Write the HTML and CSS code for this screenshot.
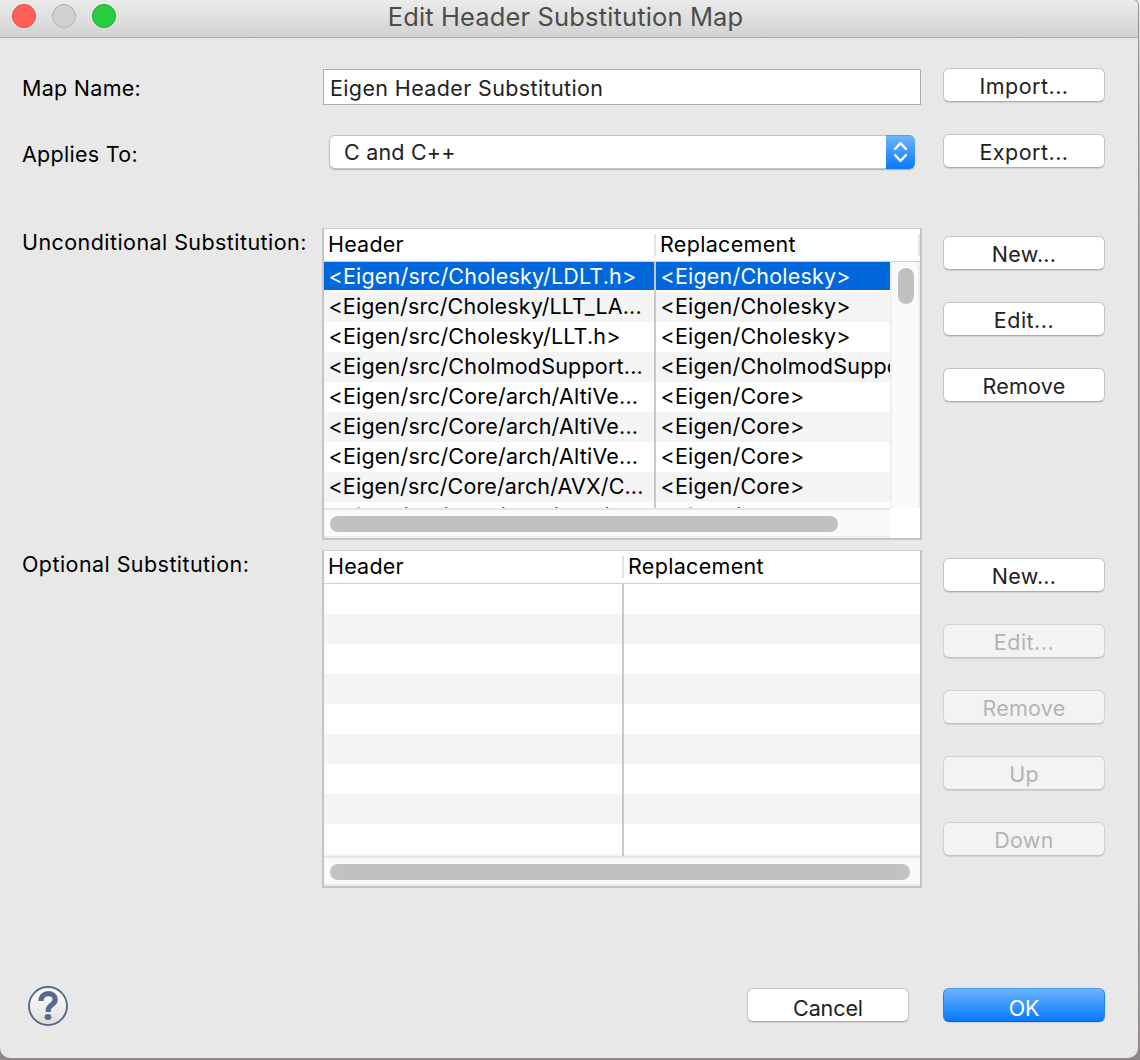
FILE: index.html
```html
<!DOCTYPE html>
<html lang="en">
<head>
<meta charset="utf-8">
<title>Edit Header Substitution Map</title>
<link rel="stylesheet" href="styles.css">
</head>
<body>
<main class="window">
  <header class="titlebar">
    <div class="lights"><span class="light close"></span><span class="light minimize"></span><span class="light zoom"></span></div>
    <h1 class="title">Edit Header Substitution Map</h1>
  </header>
  <section class="form">
    <label class="label label-field">Map Name:</label>
    <div class="field"><div class="text-input">Eigen Header Substitution</div></div>
    <div class="actions"><button class="btn dots">Import...</button></div>

    <label class="label label-field">Applies To:</label>
    <div class="field"><div class="select"><span class="select-value">C and C++</span>
      <span class="select-arrows"><svg width="29" height="34" viewBox="0 0 29 34" fill="none" stroke="#fff" stroke-width="2.4" stroke-linecap="round" stroke-linejoin="round"><path d="M9 14l5.500-5.800 5.500 5.800M9 20l5.500 5.800 5.500-5.800"/></svg></span></div></div>
    <div class="actions"><button class="btn dots">Export...</button></div>

    <label class="label label-wide">Unconditional Substitution:</label>
    <div class="table table-first">
      <div class="thead"><span class="th">Header</span><span class="th th-split">Replacement</span><span class="th-end"></span></div>
      <div class="tbody">
        <div class="rows">
          <div class="row selected"><span class="td">&lt;Eigen/src/Cholesky/LDLT.h&gt;</span><span class="td">&lt;Eigen/Cholesky&gt;</span></div>
          <div class="row"><span class="td snug">&lt;Eigen/src/Cholesky/LLT_LA...</span><span class="td">&lt;Eigen/Cholesky&gt;</span></div>
          <div class="row"><span class="td">&lt;Eigen/src/Cholesky/LLT.h&gt;</span><span class="td">&lt;Eigen/Cholesky&gt;</span></div>
          <div class="row"><span class="td">&lt;Eigen/src/CholmodSupport...</span><span class="td">&lt;Eigen/CholmodSupport&gt;</span></div>
          <div class="row"><span class="td">&lt;Eigen/src/Core/arch/AltiVe...</span><span class="td">&lt;Eigen/Core&gt;</span></div>
          <div class="row"><span class="td">&lt;Eigen/src/Core/arch/AltiVe...</span><span class="td">&lt;Eigen/Core&gt;</span></div>
          <div class="row"><span class="td">&lt;Eigen/src/Core/arch/AltiVe...</span><span class="td">&lt;Eigen/Core&gt;</span></div>
          <div class="row"><span class="td snug">&lt;Eigen/src/Core/arch/AVX/C...</span><span class="td">&lt;Eigen/Core&gt;</span></div>
          <div class="row"><span class="td snug">&lt;Eigen/src/Core/arch/AVX/M...</span><span class="td">&lt;Eigen/Core&gt;</span></div>
        </div>
        <div class="vscroll"><div class="vthumb"></div></div>
      </div>
      <div class="hscroll"><div class="hthumb"></div></div>
    </div>
    <div class="actions actions-table">
      <button class="btn">New...</button><button class="btn dots">Edit...</button><button class="btn">Remove</button>
    </div>

    <label class="label label-wide">Optional Substitution:</label>
    <div class="table table-second">
      <div class="thead"><span class="th">Header</span><span class="th th-split">Replacement</span></div>
      <div class="tbody">
        <div class="rows">
          <div class="row"><span class="td"></span><span class="td"></span></div>
          <div class="row"><span class="td"></span><span class="td"></span></div>
          <div class="row"><span class="td"></span><span class="td"></span></div>
          <div class="row"><span class="td"></span><span class="td"></span></div>
          <div class="row"><span class="td"></span><span class="td"></span></div>
          <div class="row"><span class="td"></span><span class="td"></span></div>
          <div class="row"><span class="td"></span><span class="td"></span></div>
          <div class="row"><span class="td"></span><span class="td"></span></div>
          <div class="row"><span class="td"></span><span class="td"></span></div>
          <div class="row"><span class="td"></span><span class="td"></span></div>
        </div>
      </div>
      <div class="hscroll"><div class="hthumb"></div></div>
    </div>
    <div class="actions actions-table">
      <button class="btn">New...</button><button class="btn dots" disabled>Edit...</button><button class="btn" disabled>Remove</button><button class="btn" disabled>Up</button><button class="btn" disabled>Down</button>
    </div>
  </section>
  <footer class="footer">
    <svg class="help" width="40" height="40" viewBox="0 0 40 40"><defs><linearGradient id="g" x2="0" y2="1"><stop stop-color="#fff"/><stop offset="1" stop-color="#dedede"/></linearGradient></defs><circle cx="20" cy="20" r="19" fill="url(#g)" stroke="#566a8b" stroke-width="1.900"/><path d="M13 15C13 10.200 16 7.700 20.200 7.700c4.300 0 7 2.300 7 5.800 0 5.500-6.900 5-6.900 10.500v2" fill="none" stroke="#566a8b" stroke-width="5.200"/><ellipse cx="20" cy="31" rx="3.400" ry="3" fill="#566a8b"/></svg>
    <button class="btn cancel">Cancel</button>
    <button class="btn primary">OK</button>
  </footer>
</main>
</body>
</html>
```
FILE: styles.css
```css
* { box-sizing: border-box; }
body {
  margin: 0;
  height: 1060px;
  overflow: hidden;
  background: linear-gradient(#f2f2f2, #c8c8c8 100px, #a8a8a8 240px, #a6a6a6 900px, #8c8789);
  font: 21.5px/26px Inter, "Liberation Sans", sans-serif;
  letter-spacing: .2px;
  color: #000;
}
.window {
  width: 1138px;
  height: 1058px;
  background: #e8e8e8;
  border-radius: 0 5px 10px 10px;
  box-shadow: 0 0 0 1px #8f8f8f;
  overflow: hidden;
}
.titlebar {
  height: 38px;
  display: grid;
  grid-template-columns: 104px 1fr 123px;
  padding-left: 12px;
  background: linear-gradient(#ebebeb, #d2d2d2);
  border-bottom: 1px solid #acacac;
}
.lights { display: flex; gap: 16px; padding-top: 4px; }
.light { width: 24px; height: 24px; border-radius: 50%; border: 1px solid; }
.close { background: #ff6059; border-color: #e64842; }
.minimize { background: #d1d1d1; border-color: #afafaf; }
.zoom { background: #29cc41; border-color: #1dad2c; }
.title {
  margin: 0;
  padding-top: 1px;
  text-align: center;
  font-size: 25.5px;
  line-height: 32px;
  letter-spacing: .14px;
  font-weight: 400;
  color: #4c4c4c;
  white-space: nowrap;
}
.form {
  display: grid;
  grid-template-columns: 300px 600px 162px;
  grid-template-rows: 66px 94px 322px 338px;
  column-gap: 0;
  padding: 30px 0 0 22px;
}
.label { padding-top: 1px; white-space: nowrap; }
.label-field { padding-top: 7px; letter-spacing: .28px; }
.label-wide { letter-spacing: .43px; }
.actions { padding-left: 21px; display: flex; flex-direction: column; gap: 32px; }
.actions-table { padding-top: 8px; }
.btn {
  width: 162px;
  height: 34px;
  flex: none;
  padding: 2px 0 0;
  border: 1px solid #c3c3c3;
  border-bottom-color: #adadad;
  border-radius: 6px;
  background: #fff;
  box-shadow: 0 1px 1px rgba(0, 0, 0, .1);
  font: inherit;
  letter-spacing: .25px;
  line-height: 30px;
  color: #222;
}
.dots { letter-spacing: .48px; }
.btn:disabled { background: #f3f3f3; border-color: #d2d2d2; border-bottom-color: #c3c3c3; color: #b4b4b4; }
.text-input {
  margin: 1px 1px 0;
  height: 36px;
  border: 1px solid #acacac;
  background: #fff;
  padding: 5px 6px;
  letter-spacing: .37px;
  color: #222;
}
.select {
  margin: 1px 7px 0;
  height: 34px;
  display: flex;
  justify-content: space-between;
  border-radius: 6px;
  background: #fff;
  overflow: hidden;
  box-shadow: inset 0 0 0 1px #c3c3c3, 0 1px 1px rgba(0, 0, 0, .25);
  color: #222;
}
.select-value { padding: 4px 0 0 15px; }
.select-arrows { width: 29px; background: linear-gradient(#6cb3fa, #067aff); border-top: 1px solid #50a1f3; }
.select-arrows svg { display: block; margin-top: -1px; }
.table {
  display: flex;
  flex-direction: column;
  border: 2px solid #c4c4c4;
  border-top: 1px solid #cfcfcf;
  background: #fff;
}
.table-first { height: 312px; --first: 331px; }
.table-second { height: 338px; --first: 299px; }
.thead { height: 33px; display: flex; flex: none; border-bottom: 1px solid #d0d0d0; }
.th { padding: 2px 0 0 4px; width: var(--first); }
.th-split {
  padding-left: 6px;
  width: auto;
  flex: 1;
  margin-left: -1px;
  letter-spacing: .32px;
  background: linear-gradient(#e2e2e2, #e2e2e2) 0 5px / 2px 22px no-repeat;
}
.th-end { width: 2px; height: 22px; margin-top: 5px; background: #e8e8e8; }
.tbody { flex: 1; min-height: 0; display: flex; overflow: hidden; }
.rows {
  flex: 1;
  min-width: 0;
  background: linear-gradient(#c8c8c8, #c8c8c8) calc(var(--first) - 1px) 0 / 2px 100% no-repeat;
}
.row { height: 30px; display: grid; grid-template-columns: calc(var(--first) - 1px) 1fr; column-gap: 2px; }
.td { padding: 1px 0 0 4.5px; overflow: hidden; white-space: nowrap; }
.snug { letter-spacing: .13px; }
.row:nth-child(even) .td { background: #f4f4f4; }
.selected { color: #fff; }
.selected .td { height: 28px; background: #0068da; }
.vscroll { width: 30px; background: #fafafa; border-left: 2px solid #eee; border-right: 2px solid #eee; padding: 6px; }
.vthumb { width: 16px; height: 36px; border-radius: 8px; background: #c1c1c1; }
.hscroll {
  flex: none;
  height: 30px;
  border-top: 2px solid #e6e6e6;
  border-bottom: 2px solid #ededed;
  background: #fafafa;
  padding: 6px;
}
.table-first .hscroll { width: 566px; }
.hthumb { height: 16px; border-radius: 8px; background: #c1c1c1; }
.table-first .hthumb { width: 508px; }
.table-second .hthumb { width: 580px; }
.footer { display: flex; padding: 98px 33px 0 28px; align-items: flex-start; }
.footer .btn { margin-top: 2px; padding-top: 4px; letter-spacing: -.1px; }
.cancel { margin-left: auto; margin-right: 34px; }
.footer .primary {
  border-color: #3f99f5 #217ff2 #0a62e8;
  background: linear-gradient(#6cb3fa, #067aff);
  color: #fff;
}
```
